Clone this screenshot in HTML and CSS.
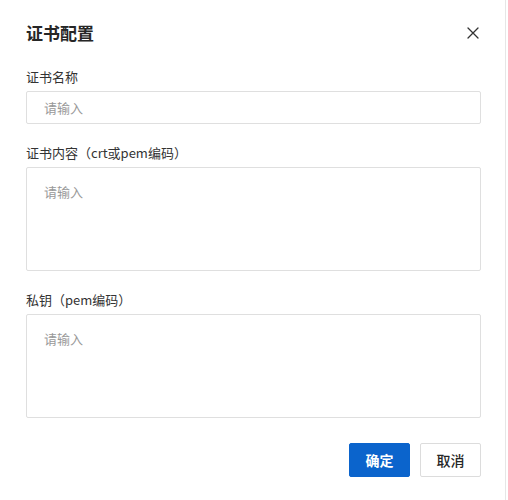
FILE: index.html
```html
<!DOCTYPE html>
<html lang="zh-CN">
<head>
<meta charset="utf-8">
<title>证书配置</title>
<link rel="stylesheet" href="styles.css">
</head>
<body>
<div class="dialog">
  <div class="header">
    <h2 class="title">证书配置</h2>
    <button class="close" aria-label="关闭">
      <svg width="12" height="12" viewBox="0 0 12 12"><path d="M1 1L11 11M11 1L1 11" stroke="#333" stroke-width="1.3" fill="none" stroke-linecap="round"/></svg>
    </button>
  </div>
  <div class="field">
    <label class="label">证书名称</label>
    <div class="input"><span class="ph">请输入</span></div>
  </div>
  <div class="field">
    <label class="label">证书内容（crt或pem编码）</label>
    <div class="textarea"><span class="ph">请输入</span></div>
  </div>
  <div class="field">
    <label class="label">私钥（pem编码）</label>
    <div class="textarea"><span class="ph">请输入</span></div>
  </div>
  <div class="footer">
    <button class="btn primary">确定</button>
    <button class="btn">取消</button>
  </div>
</div>
</body>
</html>
```
FILE: styles.css
```css
html, body {
  margin: 0;
  padding: 0;
  background: #fff;
}
body {
  font-family: "PingFang SC", "Noto Sans CJK SC", "Noto Sans", sans-serif;
  color: #333;
}
.dialog {
  width: 506px;
  height: 500px;
  box-sizing: border-box;
  border-right: 1px solid #e6e6e6;
  padding: 21px 24px 0 26px;
  display: flex;
  flex-direction: column;
}
.header {
  display: flex;
  align-items: center;
  justify-content: space-between;
  height: 24px;
  margin-bottom: 22px;
}
.title {
  margin: 0;
  font-size: 17px;
  line-height: 24px;
  font-weight: 600;
  color: #262626;
}
.close {
  border: 0;
  background: none;
  padding: 0;
  width: 12px;
  height: 12px;
  margin-right: 2px;
  display: flex;
}
.field {
  display: flex;
  flex-direction: column;
  margin-bottom: 19px;
}
.label {
  font-size: 13px;
  line-height: 20px;
  color: #333;
  margin-bottom: 4px;
}
.input, .textarea {
  border: 1px solid #dfdfdf;
  border-radius: 2px;
  box-sizing: border-box;
  padding: 0 17px;
}
.input {
  height: 33px;
  display: flex;
  align-items: center;
}
.textarea {
  height: 104px;
  padding-top: 10px;
}
.ph {
  font-size: 13px;
  line-height: 20px;
  color: #999;
}
.footer {
  display: flex;
  justify-content: flex-end;
  gap: 10px;
  margin-top: 6px;
}
.btn {
  width: 61px;
  height: 34px;
  border: 1px solid #dcdcdc;
  border-radius: 2px;
  background: #fff;
  color: #262626;
  font-family: inherit;
  font-size: 14px;
  font-weight: 500;
  padding: 0;
}
.btn.primary {
  background: #0b64cc;
  border-color: #0b64cc;
  color: #fff;
  font-weight: 600;
}
```
